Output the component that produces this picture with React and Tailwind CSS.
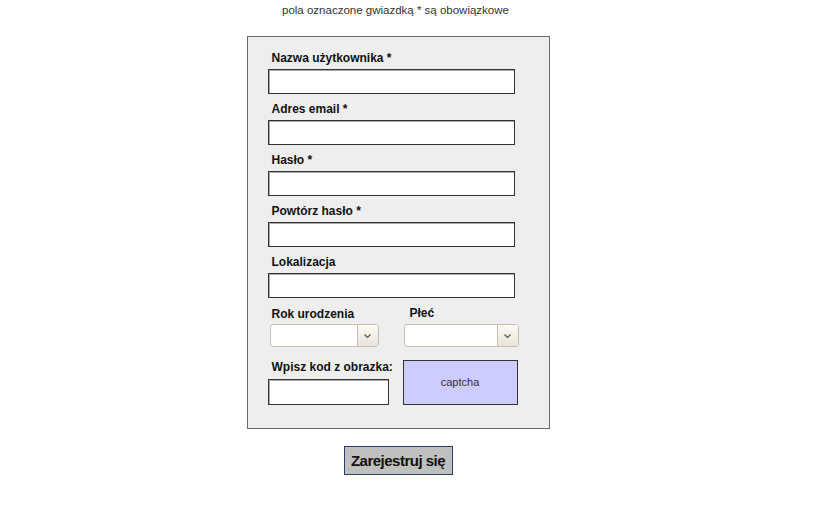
import React from "react";

const Label = ({ children, className = "" }) => (
  <div className={`h-[14px] leading-[14px] text-[12px] font-bold text-[#111] whitespace-nowrap ${className}`}>{children}</div>
);

const Input = ({ className = "" }) => (
  <div className={`bg-white border border-[#333] shadow-[inset_1px_1px_0_#aaa] ${className}`} />
);

const Select = ({ className = "" }) => (
  <div className={`flex h-[23px] rounded-[3px] border border-[#c9bfa9] bg-white overflow-hidden ${className}`}>
    <div className="flex-1" />
    <div className="w-[21px] border-l border-[#c9bfa9] bg-gradient-to-b from-[#fbfaf6] to-[#e8e4da] flex items-center justify-center">
      <svg width="9" height="6" viewBox="0 0 9 6">
        <path d="M1.5 1.5 L4.5 4.5 L7.5 1.5" fill="none" stroke="#555" strokeWidth="1.2" />
      </svg>
    </div>
  </div>
);

export default function App() {
  return (
    <div className="w-[796px] bg-white pb-[36px]" style={{ fontFamily: '"Liberation Sans", Arial, sans-serif' }}>
      <div className="flex flex-col items-center">
        <div className="mt-[4px] mr-[5px] h-[13px] leading-[13px] text-[11.5px] text-[#333] whitespace-nowrap">
          pola oznaczone gwiazdką * są obowiązkowe
        </div>
        <div className="mt-[19px] w-[303px] h-[393px] border border-[#6a6a6a] bg-[#eeeeee] pl-[20px] pt-[14px]">
          {["Nazwa użytkownika *", "Adres email *", "Hasło *", "Powtórz hasło *", "Lokalizacja"].map((t) => (
            <div key={t} className="mb-[8px]">
              <Label className="pl-[4px]">{t}</Label>
              <Input className="mt-[4px] w-[247px] h-[25px]" />
            </div>
          ))}
          <div className="flex mt-[1px]">
            <div className="w-[136px]">
              <Label className="pl-[4px] mt-[1px]">Rok urodzenia</Label>
              <Select className="mt-[3px] ml-[2px] w-[109px]" />
            </div>
            <div>
              <Label className="pl-[6px]">Płeć</Label>
              <Select className="mt-[4px] w-[115px]" />
            </div>
          </div>
          <div className="flex mt-[13px]">
            <div className="w-[135px]">
              <Label className="pl-[4px]">Wpisz kod z obrazka:</Label>
              <Input className="mt-[5px] w-[121px] h-[26px]" />
            </div>
            <div className="w-[115px] h-[45px] bg-[#ccccff] border border-[#333] flex items-center justify-center text-[11px] text-[#333]">
              captcha
            </div>
          </div>
        </div>
        <button className="mt-[17px] w-[109px] h-[29px] bg-[#c0c0c0] border border-[#2c3e6e] text-[15px] tracking-[-0.5px] font-bold text-[#111] leading-none whitespace-nowrap">
          Zarejestruj się
        </button>
      </div>
    </div>
  );
}
